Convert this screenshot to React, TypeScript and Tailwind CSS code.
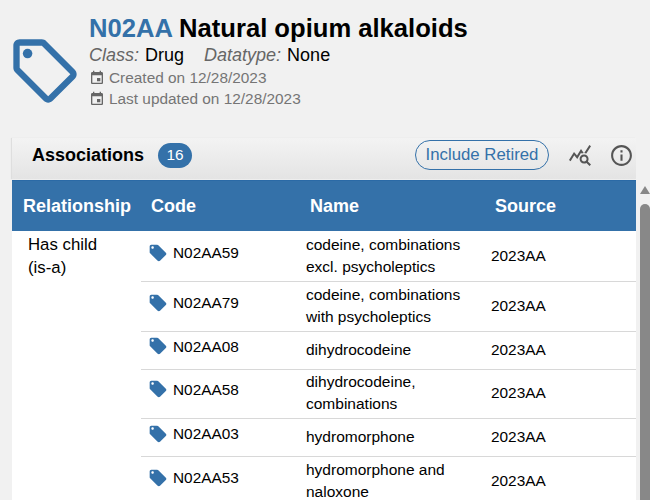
const rows = [
  { code: 'N02AA59', name: ['codeine, combinations', 'excl. psycholeptics'], h: 'h-[51px] pb-px', codeY: 'pb-[5px]' },
  { code: 'N02AA79', name: ['codeine, combinations', 'with psycholeptics'], h: 'h-[50px] pb-[2px]', codeY: 'pb-[5px]' },
  { code: 'N02AA08', name: ['dihydrocodeine'], h: 'h-[38px] pb-[2px]', codeY: 'pb-[6px]' },
  { code: 'N02AA58', name: ['dihydrocodeine,', 'combinations'], h: 'h-[49px] pb-[2px]', codeY: 'pb-[7px]' },
  { code: 'N02AA03', name: ['hydromorphone'], h: 'h-[38px] pb-[2px]', codeY: 'pb-[5px]' },
  { code: 'N02AA53', name: ['hydromorphone and', 'naloxone'], h: 'h-[50px] pb-[2px]', codeY: 'pb-[5px]' },
]

function TagOutline() {
  return (
    <svg width="76" height="76" viewBox="0 0 24 24" fill="#3471a9" className="shrink-0">
      <path d="m21.41 11.58-9-9C12.05 2.22 11.55 2 11 2H4c-1.1 0-2 .9-2 2v7c0 .55.22 1.05.59 1.42l9 9c.36.36.86.58 1.41.58s1.05-.22 1.41-.59l7-7c.37-.36.59-.86.59-1.41s-.23-1.06-.59-1.42zM13 20.01 4 11V4h7v-.01l9 9-7 7.02z" />
      <circle cx="6.500" cy="6.500" r="1.500" />
    </svg>
  )
}

function TagFilled() {
  return (
    <svg width="20" height="20" viewBox="0 0 24 24" fill="#3471a9" className="shrink-0">
      <path d="m21.41 11.58-9-9C12.05 2.22 11.55 2 11 2H4c-1.1 0-2 .9-2 2v7c0 .55.22 1.05.59 1.42l9 9c.36.36.86.58 1.41.58.55 0 1.05-.22 1.41-.59l7-7c.37-.36.59-.86.59-1.41 0-.55-.23-1.06-.59-1.42zM5.500 7C4.670 7 4 6.330 4 5.500S4.670 4 5.500 4 7 4.670 7 5.500 6.330 7 5.500 7z" />
    </svg>
  )
}

function CalendarIcon() {
  return (
    <svg width="16" height="16" viewBox="0 0 24 24" fill="#666" className="shrink-0">
      <path d="M17 12h-5v5h5v-5zM16 1v2H8V1H6v2H5c-1.110 0-1.990.9-1.990 2L3 19c0 1.100.89 2 2 2h14c1.100 0 2-.9 2-2V5c0-1.100-.9-2-2-2h-1V1h-2zm3 18H5V8h14v11z" />
    </svg>
  )
}

export default function App() {
  return (
    <div className="h-[500px] w-[650px] overflow-hidden bg-[#f1f1f1] font-['Liberation_Sans',Arial,sans-serif]">
      <header className="flex h-[138px] items-start pl-[7px] pt-[14px]">
        <div className="mt-[19px] w-[82px] shrink-0">
          <TagOutline />
        </div>
        <div>
          <h1 className="text-[25.6px] font-bold leading-[28px] text-black">
            <span className="text-[#3471a9]">N02AA</span> Natural opium alkaloids
          </h1>
          <p className="mt-[3px] text-[18px] leading-[20px] text-black">
            <i className="text-[#666]">Class:</i> <span className="ml-px">Drug</span>
            <i className="ml-[20px] text-[#666]">Datatype:</i> <span className="ml-[1px]">None</span>
          </p>
          <p className="mt-[2px] flex h-[21px] items-center gap-[4px] text-[15.4px] text-[#757575]">
            <CalendarIcon />
            Created on 12/28/2023
          </p>
          <p className="flex h-[22px] items-center gap-[4px] text-[15.4px] text-[#757575]">
            <CalendarIcon />
            Last updated on 12/28/2023
          </p>
        </div>
      </header>

      <div className="flex">
        <section className="ml-[12px] w-[624px] shrink-0">
          <div className="flex h-[41px] items-center bg-gradient-to-b from-[#f3f3f3] to-[#e4e4e4] pb-[7px] pl-[20px] pr-[2px] shadow-[-1px_0_1px_rgba(0,0,0,0.08)]">
            <h2 className="text-[18px] font-bold text-black">Associations</h2>
            <span className="ml-[14px] flex h-[25px] w-[34px] items-center justify-center rounded-full bg-[#3471a9] text-[15.4px] text-white">
              16
            </span>
            <span className="ml-auto flex h-[30px] w-[134px] items-center justify-center rounded-full border border-[#3471a9] text-[16.800px] text-[#3471a9]">
              Include Retired
            </span>
            <svg width="24" height="24" viewBox="0 0 24 24" fill="#555" className="ml-[19px]">
              <path d="M19.880 18.470c.44-.7.7-1.510.7-2.390 0-2.490-2.010-4.500-4.500-4.500s-4.500 2.010-4.500 4.500 2.010 4.500 4.490 4.500c.88 0 1.700-.26 2.390-.7L21.580 23 23 21.580l-3.120-3.110zm-3.800.11c-1.380 0-2.500-1.120-2.500-2.500s1.120-2.500 2.500-2.500 2.500 1.120 2.500 2.500-1.120 2.500-2.500 2.500zm-.36-8.500c-.74.02-1.450.18-2.100.45l-.55-.83-3.800 6.180-3.010-3.520-3.630 5.810L1 17l5-8 3 3.500L13 6l2.720 4.080zm2.590.5c-.64-.28-1.330-.45-2.050-.49L21.380 2 23 3.180l-4.690 7.400z" />
            </svg>
            <svg width="25" height="25" viewBox="0 0 24 24" fill="#555" className="ml-[17px]">
              <path d="M11 7h2v2h-2zm0 4h2v6h-2zm1-9C6.480 2 2 6.480 2 12s4.480 10 10 10 10-4.480 10-10S17.520 2 12 2zm0 18c-4.410 0-8-3.590-8-8s3.590-8 8-8 8 3.590 8 8-3.590 8-8 8z" />
            </svg>
          </div>

          <div className="mt-px flex h-[51px] items-center border-t border-[#2b6aa6] bg-[#3471a9] text-[18px] font-bold text-white">
            <span className="w-[139px] pl-[11px]">Relationship</span>
            <span className="w-[158px]">Code</span>
            <span className="w-[186px] pl-px">Name</span>
            <span>Source</span>
          </div>

          <div className="flex bg-white text-[15.4px] text-black">
            <div className="w-[129px] shrink-0 pl-[16px] pt-[2px] text-[16.8px] leading-[23px]">
              Has child
              <br />
              (is-a)
            </div>
            <div className="min-w-0 flex-1">
              {rows.map((row) => (
                <div key={row.code} className={`flex items-center border-b border-[#d8d8d8] ${row.h}`}>
                  <div className={`flex w-[165px] items-center gap-[5px] pl-[7px] ${row.codeY}`}>
                    <TagFilled />
                    {row.code}
                  </div>
                  <div className="w-[185px] text-[15.5px] leading-[22px]">
                    {row.name.map((line) => (
                      <div key={line}>{line}</div>
                    ))}
                  </div>
                  <div>2023AA</div>
                </div>
              ))}
            </div>
          </div>
        </section>

        <div className="flex w-[14px] flex-col items-center pl-[4px] pt-[48px]">
          <div className="h-0 w-0 border-x-[5px] border-b-[8px] border-x-transparent border-b-[#888]" />
          <div className="mt-[10px] h-[400px] w-[10px] rounded-[5px] bg-[#888]" />
        </div>
      </div>
    </div>
  )
}
